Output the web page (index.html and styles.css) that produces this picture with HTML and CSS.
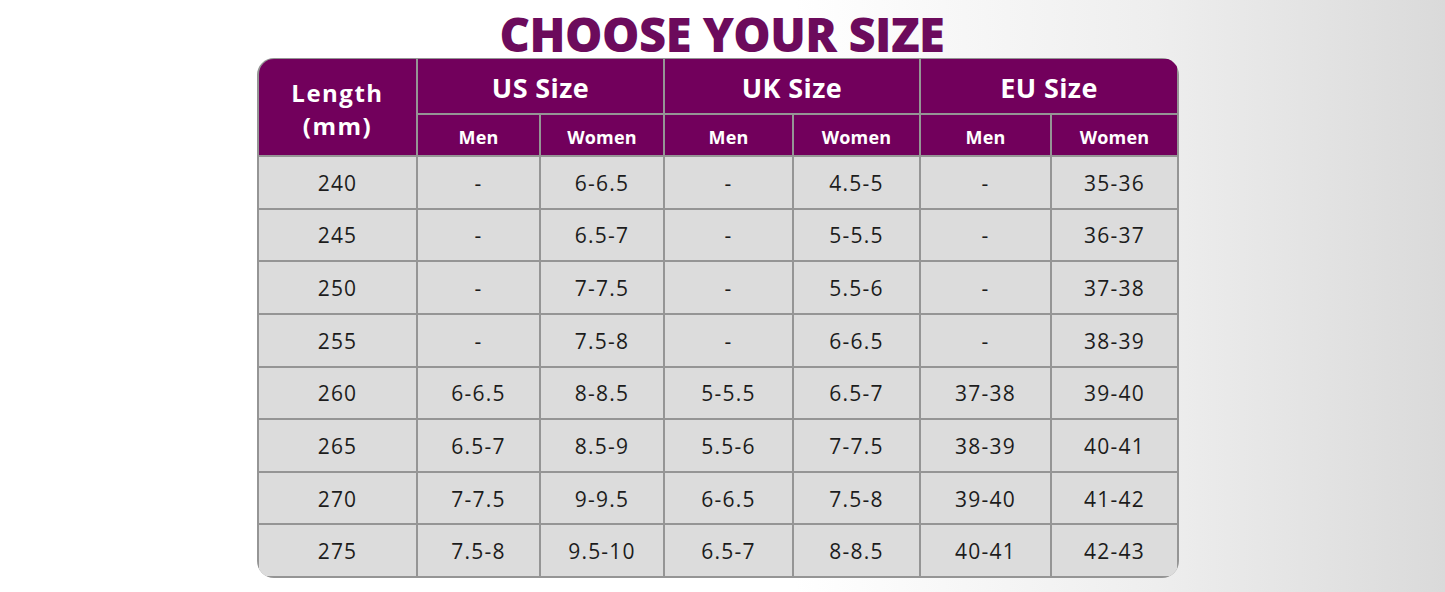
FILE: index.html
```html
<!DOCTYPE html>
<html>
<head>
<meta charset="utf-8">
<link rel="stylesheet" href="styles.css">
</head>
<body>
<div class="page">
  <h1 class="title">CHOOSE YOUR SIZE</h1>
  <div class="chart">
    <div class="h1 len">Length<br>(mm)</div>
    <div class="h1 span2">US Size</div>
    <div class="h1 span2">UK Size</div>
    <div class="h1 span2">EU Size</div>
    <div class="h2">Men</div><div class="h2">Women</div>
    <div class="h2">Men</div><div class="h2">Women</div>
    <div class="h2">Men</div><div class="h2">Women</div>

    <div class="c">240</div><div class="c">-</div><div class="c">6-6.5</div><div class="c">-</div><div class="c">4.5-5</div><div class="c">-</div><div class="c">35-36</div>
    <div class="c">245</div><div class="c">-</div><div class="c">6.5-7</div><div class="c">-</div><div class="c">5-5.5</div><div class="c">-</div><div class="c">36-37</div>
    <div class="c">250</div><div class="c">-</div><div class="c">7-7.5</div><div class="c">-</div><div class="c">5.5-6</div><div class="c">-</div><div class="c">37-38</div>
    <div class="c">255</div><div class="c">-</div><div class="c">7.5-8</div><div class="c">-</div><div class="c">6-6.5</div><div class="c">-</div><div class="c">38-39</div>
    <div class="c">260</div><div class="c">6-6.5</div><div class="c">8-8.5</div><div class="c">5-5.5</div><div class="c">6.5-7</div><div class="c">37-38</div><div class="c">39-40</div>
    <div class="c">265</div><div class="c">6.5-7</div><div class="c">8.5-9</div><div class="c">5.5-6</div><div class="c">7-7.5</div><div class="c">38-39</div><div class="c">40-41</div>
    <div class="c">270</div><div class="c">7-7.5</div><div class="c">9-9.5</div><div class="c">6-6.5</div><div class="c">7.5-8</div><div class="c">39-40</div><div class="c">41-42</div>
    <div class="c">275</div><div class="c">7.5-8</div><div class="c">9.5-10</div><div class="c">6.5-7</div><div class="c">8-8.5</div><div class="c">40-41</div><div class="c">42-43</div>
  </div>
</div>
</body>
</html>
```
FILE: styles.css
```css
html, body {
  margin: 0;
  padding: 0;
}
body {
  width: 1445px;
  height: 592px;
  overflow: hidden;
  background: linear-gradient(90deg, #ffffff 0%, #ffffff 55%, #eeeeee 80%, #dadada 100%);
  font-family: "Open Sans", "Liberation Sans", sans-serif;
}
.page {
  display: flex;
  flex-direction: column;
  padding-left: 257px;
}
.title {
  margin: 0;
  width: 922px;
  height: 58px;
  text-align: center;
  padding-left: 8px;
  box-sizing: border-box;
  font-family: "Open Sans", sans-serif;
  font-weight: 800;
  font-size: 47px;
  line-height: 68px;
  color: #6c0b5c;
  letter-spacing: -0.5px;
}
.chart {
  box-sizing: border-box;
  width: 922px;
  height: 520px;
  padding: 1px 2px 2px 2px;
  background: #959595;
  border-radius: 17px;
  overflow: hidden;
  display: grid;
  grid-template-columns: 157px 121px 122px 127px 125px 129px 125px;
  grid-template-rows: 54px 40px repeat(8, 1fr);
  gap: 2px;
}
.h1, .h2 {
  background: #72005c;
  color: #ffffff;
  display: flex;
  align-items: center;
  justify-content: center;
  text-align: center;
  font-weight: 700;
}
.h1 {
  font-size: 27px;
  letter-spacing: 0.4px;
}
.h1.len {
  grid-row: span 2;
  font-size: 24px;
  letter-spacing: 1.5px;
  line-height: 33px;
  padding-top: 4px;
}
.h1.span2 {
  grid-column: span 2;
  padding-top: 2px;
}
.h2 {
  font-size: 18px;
  padding-top: 3px;
  letter-spacing: 0.2px;
}
.c {
  background: #dcdcdc;
  color: #1c1c1c;
  display: flex;
  align-items: center;
  justify-content: center;
  font-size: 21px;
  letter-spacing: 1.2px;
  padding-top: 1px;
}
.chart > :first-child { border-top-left-radius: 15px; }
```
